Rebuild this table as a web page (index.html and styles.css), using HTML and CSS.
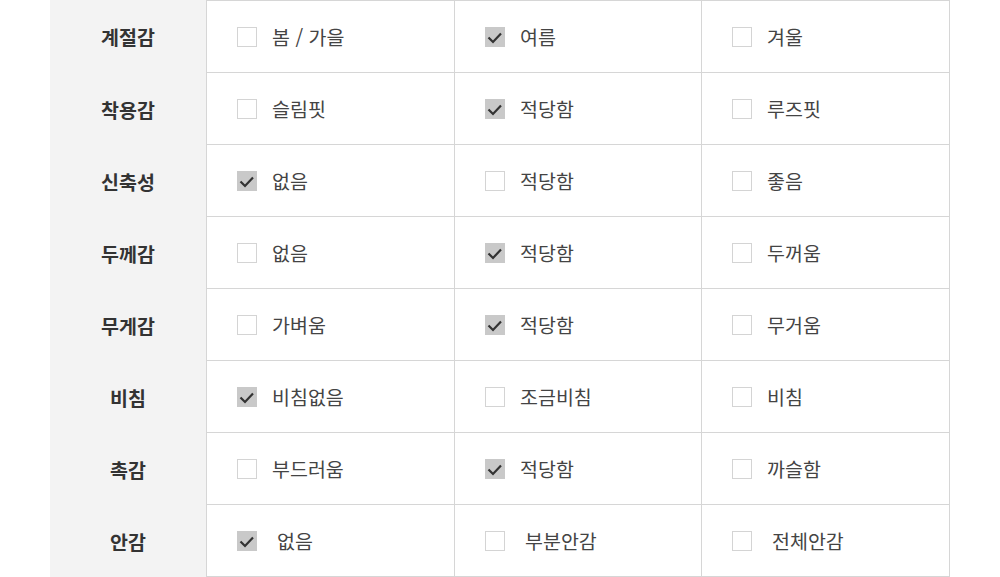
FILE: index.html
```html
<!DOCTYPE html>
<html lang="ko">
<head>
<meta charset="utf-8">
<link rel="stylesheet" href="styles.css">
</head>
<body>
<div class="table">
  <div class="row first">
    <div class="head">계절감</div>
    <div class="cell"><span class="box"></span><span class="label">봄 / 가을</span></div>
    <div class="cell"><span class="box on"><svg viewBox="0 0 20 20"><path d="M3.5 10.5 L8 15 L16 6.5"/></svg></span><span class="label">여름</span></div>
    <div class="cell"><span class="box"></span><span class="label">겨울</span></div>
  </div>
  <div class="row">
    <div class="head">착용감</div>
    <div class="cell"><span class="box"></span><span class="label">슬림핏</span></div>
    <div class="cell"><span class="box on"><svg viewBox="0 0 20 20"><path d="M3.5 10.5 L8 15 L16 6.5"/></svg></span><span class="label">적당함</span></div>
    <div class="cell"><span class="box"></span><span class="label">루즈핏</span></div>
  </div>
  <div class="row">
    <div class="head">신축성</div>
    <div class="cell"><span class="box on"><svg viewBox="0 0 20 20"><path d="M3.5 10.5 L8 15 L16 6.5"/></svg></span><span class="label">없음</span></div>
    <div class="cell"><span class="box"></span><span class="label">적당함</span></div>
    <div class="cell"><span class="box"></span><span class="label">좋음</span></div>
  </div>
  <div class="row">
    <div class="head">두께감</div>
    <div class="cell"><span class="box"></span><span class="label">없음</span></div>
    <div class="cell"><span class="box on"><svg viewBox="0 0 20 20"><path d="M3.5 10.5 L8 15 L16 6.5"/></svg></span><span class="label">적당함</span></div>
    <div class="cell"><span class="box"></span><span class="label">두꺼움</span></div>
  </div>
  <div class="row">
    <div class="head">무게감</div>
    <div class="cell"><span class="box"></span><span class="label">가벼움</span></div>
    <div class="cell"><span class="box on"><svg viewBox="0 0 20 20"><path d="M3.5 10.5 L8 15 L16 6.5"/></svg></span><span class="label">적당함</span></div>
    <div class="cell"><span class="box"></span><span class="label">무거움</span></div>
  </div>
  <div class="row">
    <div class="head">비침</div>
    <div class="cell"><span class="box on"><svg viewBox="0 0 20 20"><path d="M3.5 10.5 L8 15 L16 6.5"/></svg></span><span class="label">비침없음</span></div>
    <div class="cell"><span class="box"></span><span class="label">조금비침</span></div>
    <div class="cell"><span class="box"></span><span class="label">비침</span></div>
  </div>
  <div class="row">
    <div class="head">촉감</div>
    <div class="cell"><span class="box"></span><span class="label">부드러움</span></div>
    <div class="cell"><span class="box on"><svg viewBox="0 0 20 20"><path d="M3.5 10.5 L8 15 L16 6.5"/></svg></span><span class="label">적당함</span></div>
    <div class="cell"><span class="box"></span><span class="label">까슬함</span></div>
  </div>
  <div class="row">
    <div class="head">안감</div>
    <div class="cell"><span class="box on"><svg viewBox="0 0 20 20"><path d="M3.5 10.5 L8 15 L16 6.5"/></svg></span><span class="label wide">없음</span></div>
    <div class="cell"><span class="box"></span><span class="label wide">부분안감</span></div>
    <div class="cell"><span class="box"></span><span class="label wide">전체안감</span></div>
  </div>
</div>
</body>
</html>
```
FILE: styles.css
```css
html, body {
  margin: 0;
  padding: 0;
  background: #fff;
}
body {
  font-family: "Noto Sans CJK KR", "Noto Sans", sans-serif;
  color: #444;
}
.table {
  margin-left: 50px;
  width: 900px;
}
.row {
  display: grid;
  grid-template-columns: 156px 249px 247px 248px;
  height: 72px;
}
.row.first {
  height: 73px;
}
.head {
  background: #f3f3f3;
  display: flex;
  align-items: center;
  justify-content: center;
  font-size: 19.5px;
  font-weight: 700;
  color: #333;
}
.cell {
  display: flex;
  align-items: center;
  padding-left: 30px;
  border-right: 1px solid #d6d6d6;
  border-bottom: 1px solid #d6d6d6;
  font-size: 19.5px;
  color: #444;
}
.row .cell:nth-child(2) {
  border-left: 1px solid #d6d6d6;
}
.row.first .cell {
  border-top: 1px solid #d6d6d6;
}
.box {
  width: 20px;
  height: 20px;
  box-sizing: border-box;
  border: 1px solid #d4d4d4;
  background: #fff;
  flex: none;
  display: flex;
}
.box.on {
  background: #c9c9c9;
  border-color: #c9c9c9;
}
.box svg {
  width: 20px;
  height: 20px;
  margin: -1px;
}
.box svg path {
  fill: none;
  stroke: #333;
  stroke-width: 2.2;
}
.label {
  margin-left: 15px;
  line-height: 1;
}
.label.wide {
  margin-left: 20px;
}
```
